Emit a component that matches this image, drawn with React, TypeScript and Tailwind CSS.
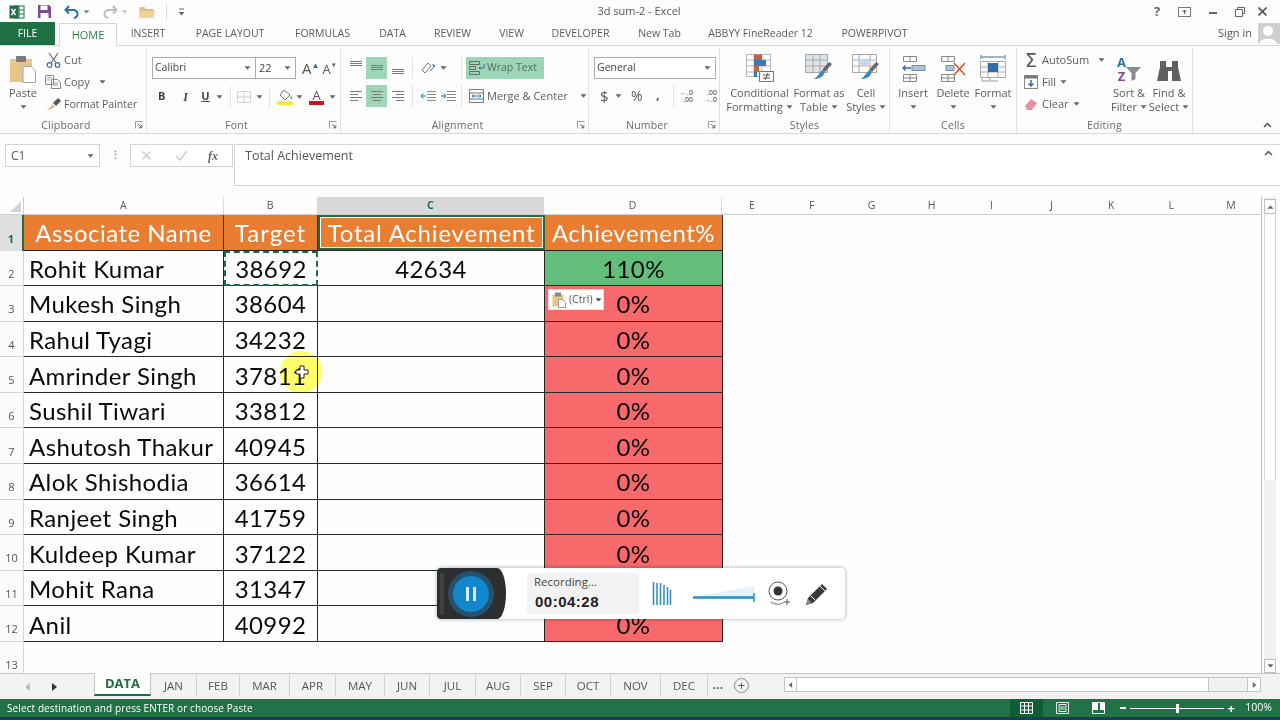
import React from "react";

const Caret = ({ c = "#666", className = "" }: { c?: string; className?: string }) => (
  <svg width="7" height="4" viewBox="0 0 7 4" className={className}><path d="M0.5 0.2h6L3.5 3.8z" fill={c} /></svg>
);

const Sep = () => <div className="w-px h-[22px] bg-[#e4e4e4] shrink-0" />;

const Lines = ({ kind, y = 0 }: { kind: "l" | "c" | "r" | "top" | "mid" | "bot"; y?: number }) => {
  const rows: [number, number][] =
    kind === "l" ? [[1, 13], [1, 9], [1, 13], [1, 9]] :
    kind === "c" ? [[1, 13], [3, 11], [1, 13], [3, 11]] :
    kind === "r" ? [[1, 13], [5, 13], [1, 13], [5, 13]] :
    [[1, 13], [1, 13], [1, 13]];
  const start = kind === "top" ? 1 : kind === "mid" ? 5 : kind === "bot" ? 9 : 3;
  return (
    <svg width="14" height="16" viewBox="0 0 14 16">
      {rows.map((r, i) => (
        <path key={i} d={`M${r[0]} ${start + i * (rows.length === 3 ? 2 : 3) + y + 0.5}H${r[1]}`} stroke="#7a7a7a" strokeWidth="1" />
      ))}
    </svg>
  );
};

const Big = ({ w, l1, l2, caret, children }: { w: number; l1: string; l2?: string; caret?: boolean; children: React.ReactNode }) => (
  <div className="flex flex-col items-center shrink-0 leading-[14px]" style={{ width: w }}>
    <div className="h-[32px] flex items-end justify-center">{children}</div>
    <div className="mt-[3px] whitespace-nowrap">{l1}</div>
    <div className="flex items-center justify-center gap-[3px] whitespace-nowrap h-[14px]">
      {l2 && <span>{l2}</span>}
      {caret && <Caret />}
    </div>
  </div>
);

const Launcher = () => (
  <svg width="8" height="8" viewBox="0 0 8 8"><path d="M0.5 7.5V0.5H7.5" fill="none" stroke="#999" /><path d="M3 3l3.5 3.5M6.8 3.8v3h-3" fill="none" stroke="#666" /></svg>
);

const Group = ({ w, label, launcher, children }: { w: number; label: string; launcher?: boolean; children: React.ReactNode }) => (
  <div className="flex flex-col shrink-0 h-[86px] mt-[1px] border-r border-[#e2e2e2]" style={{ width: w }}>
    <div className="flex-1 min-h-0">{children}</div>
    <div className={`h-[16px] relative flex items-center justify-center text-[10.5px] text-[#6a6a6a] tracking-[0.2px] pt-[1px] ${launcher ? "pr-[14px]" : ""}`}>
      <span>{label}</span>
      {launcher && <span className="absolute right-[3px] top-[4px] flex"><Launcher /></span>}
    </div>
  </div>
);

const sheetTabs: [string, number][] = [["JAN", 46], ["FEB", 43], ["MAR", 50], ["APR", 46], ["MAY", 49], ["JUN", 45], ["JUL", 46], ["AUG", 45], ["SEP", 45], ["OCT", 45], ["NOV", 50], ["DEC", 47]];

const rows: [string, string, string, string][] = [
  ["Rohit Kumar", "38692", "42634", "110%"],
  ["Mukesh Singh", "38604", "", "0%"],
  ["Rahul Tyagi", "34232", "", "0%"],
  ["Amrinder Singh", "37811", "", "0%"],
  ["Sushil Tiwari", "33812", "", "0%"],
  ["Ashutosh Thakur", "40945", "", "0%"],
  ["Alok Shishodia", "36614", "", "0%"],
  ["Ranjeet Singh", "41759", "", "0%"],
  ["Kuldeep Kumar", "37122", "", "0%"],
  ["Mohit Rana", "31347", "", "0%"],
  ["Anil", "40992", "", "0%"],
];

const ribbonTabs: [string, number][] = [["INSERT", 62], ["PAGE LAYOUT", 102], ["FORMULAS", 83], ["DATA", 57], ["REVIEW", 63], ["VIEW", 55], ["DEVELOPER", 83], ["New Tab", 75], ["ABBYY FineReader 12", 127], ["POWERPIVOT", 101]];

const colLetters = ["E", "F", "G", "H", "I", "J", "K", "L", "M"];

export default function App() {
  return (
    <div className="relative w-[1280px] h-[720px] overflow-hidden bg-[#fdfdfd] flex flex-col font-['Open_Sans',sans-serif] text-[11px] text-[#5c5c5c]">
      {/* Title bar */}
      <div className="h-[23px] flex items-center shrink-0 relative">
        <div className="flex items-center w-[200px] pl-[9px]">
          <svg width="16" height="16" viewBox="0 0 16 16"><rect x="6" y="2" width="9" height="12" fill="#fff" stroke="#217346" /><path d="M10 2v12M6 6h9M6 10h9" stroke="#217346" /><rect x="0.5" y="1.5" width="9" height="13" fill="#1d7044" /><path d="M2.5 5l4 6M6.5 5l-4 6" stroke="#fff" strokeWidth="1.4" /></svg>
          <svg className="ml-[12px]" width="15" height="15" viewBox="0 0 15 15"><path d="M1 1h11l2 2v11H1z" fill="#7d4a94" /><rect x="3.5" y="1.5" width="7" height="4.5" fill="#fff" /><rect x="3.5" y="9" width="8" height="5" fill="#fff" /></svg>
          <div className="flex items-center gap-[3px] ml-[12px]">
            <svg width="16" height="14" viewBox="0 0 16 14"><path d="M5 1L1.5 5 5 8.5M2 5h7a4 4 0 0 1 1 8" fill="none" stroke="#2a6fa8" strokeWidth="2" /></svg>
            <Caret c="#888" />
          </div>
          <div className="flex items-center gap-[3px] ml-[12px]">
            <svg width="16" height="14" viewBox="0 0 16 14"><path d="M11 1l3.5 4L11 8.5M14 5H7a4 4 0 0 0-1 8" fill="none" stroke="#bdbdbd" strokeWidth="2" /></svg>
            <Caret c="#c4c4c4" />
          </div>
          <svg className="ml-[11px]" width="16" height="13" viewBox="0 0 16 13"><path d="M0.5 2h5l1 2h8v9h-14z" fill="#e2bd7c" /><path d="M2 6h14l-2 7H0.5z" fill="#f0d49c" /></svg>
          <div className="ml-[11px] w-px h-[16px] bg-[#d9d9d9]" />
          <svg className="ml-[11px]" width="7" height="8" viewBox="0 0 7 8"><path d="M1 1h5" stroke="#666" /><path d="M0.5 4h6L3.5 7.5z" fill="#666" /></svg>
        </div>
        <div className="flex-1 text-center text-[#555] text-[11px] mr-[70px]">3d sum-2 - Excel</div>
        <div className="flex items-center w-[132px] shrink-0">
          <span className="ml-[6px] font-bold text-[#666] text-[13px] leading-none">?</span>
          <svg className="ml-[18px]" width="13" height="10" viewBox="0 0 13 10"><rect x="0.5" y="0.5" width="12" height="9" fill="none" stroke="#777" /><path d="M6.5 7V3M4.5 5l2-2 2 2" fill="none" stroke="#555" /></svg>
          <div className="ml-[18px] w-[8px] h-[2px] bg-[#666] mt-[3px]" />
          <svg className="ml-[18px]" width="10" height="10" viewBox="0 0 10 10"><path d="M2.5 2.5V0.5h7v6H7.5M0.5 2.5h7v7h-7z" fill="none" stroke="#666" /></svg>
          <svg className="ml-[13px]" width="9" height="9" viewBox="0 0 9 9"><path d="M0.5 0.5l8 8M8.5 0.5l-8 8" stroke="#555" strokeWidth="1.6" /></svg>
        </div>
      </div>

      {/* Ribbon tabs */}
      <div className="h-[23px] flex items-end shrink-0 border-b border-[#d6d6d6] relative z-10">
        <div className="w-[55px] h-[23px] bg-[#1f7145] text-white flex items-center justify-center shrink-0 text-[10.5px]">FILE</div>
        <div className="w-[4px] shrink-0" />
        <div className="w-[58px] h-[23px] -mb-px bg-[#fdfdfd] border border-b-0 border-[#d6d6d6] text-[#2f7a55] flex items-center justify-center shrink-0">HOME</div>
        {ribbonTabs.map(([t, w]) => (
          <div key={t} className="h-[23px] flex items-center justify-center shrink-0 whitespace-nowrap text-[#5a5a5a] text-[10.5px]" style={{ width: w }}>{t}</div>
        ))}
        <div className="flex-1 flex items-center justify-end h-[23px]">
          <span className="text-[#555] mr-[6px] text-[11px]">Sign in</span>
          <div className="w-[22px] h-[21px] bg-[#cfcfcf] overflow-hidden flex">
            <svg width="22" height="21" viewBox="0 0 22 21"><circle cx="10" cy="8" r="5" fill="#fff" /><path d="M1 21c1-7 17-7 18 0z" fill="#fff" /></svg>
          </div>
        </div>
      </div>

      {/* Ribbon */}
      <div className="h-[88px] flex shrink-0 border-b border-[#d9d9d9] bg-[#fdfdfd] relative">
        {/* Clipboard */}
        <Group w={147} label="Clipboard" launcher>
          <div className="flex">
            <div className="w-[46px] flex flex-col items-center pt-[8px]">
              <svg width="28" height="28" viewBox="0 0 28 28"><rect x="1" y="4" width="22" height="23" fill="#e5c58a" /><rect x="7" y="1" width="10" height="6" rx="1" fill="#7a7a7a" /><path d="M14 11.5h8l4.5 4.5v11.5H14z" fill="#fff" stroke="#a5a5a5" /></svg>
              <span className="mt-[3px] leading-[14px]">Paste</span>
              <Caret className="mt-[5px]" />
            </div>
            <div className="flex flex-col pt-[2px] leading-[22px]">
              <div className="h-[22px] flex items-center gap-[3px]">
                <svg width="15" height="16" viewBox="0 0 15 16"><path d="M3 1l7 10M12 1L5 11" stroke="#777" strokeWidth="1.3" /><circle cx="3.5" cy="13" r="2.3" fill="none" stroke="#3d6c99" strokeWidth="1.2" /><circle cx="11.5" cy="13" r="2.3" fill="none" stroke="#3d6c99" strokeWidth="1.2" /></svg>
                <span>Cut</span>
              </div>
              <div className="h-[22px] flex items-center gap-[3px] -ml-[1px]">
                <svg width="16" height="14" viewBox="0 0 16 14"><path d="M0.5 0.5h8v9h-8zM6.5 4.5h6l3 3v6h-9z" fill="#fff" stroke="#8a8a8a" /><path d="M2 3h5M2 5h3M8 8h5M8 10h5" stroke="#999" /></svg>
                <span>Copy</span>
                <Caret className="ml-[6px]" />
              </div>
              <div className="h-[22px] flex items-center gap-[2px] -ml-[1px] text-[10.5px]">
                <svg width="17" height="14" viewBox="0 0 17 14"><path d="M1 13c3-1 5-3 6-6l3 3c-3 1-6 3-9 3z" fill="#e0bb74" /><path d="M8 6l5-5 3 3-5 5z" fill="#555" /></svg>
                <span>Format Painter</span>
              </div>
            </div>
          </div>
        </Group>

        {/* Font */}
        <Group w={194} label="Font" launcher>
          <div className="flex flex-col pl-[5px]">
            <div className="flex items-center mt-[10px] h-[22px]">
              <div className="w-[104px] h-[22px] border border-[#acacac] bg-white flex items-center justify-between pl-[2px] pr-[4px] text-[#444] text-[10.5px]">
                <span>Calibri</span><Caret />
              </div>
              <div className="w-[40px] h-[22px] border border-l-0 border-[#acacac] bg-white flex items-center justify-between pl-[3px] pr-[4px] text-[#444]">
                <span>22</span><Caret />
              </div>
              <div className="flex items-baseline ml-[6px] text-[#555] text-[15px] leading-none">
                <span>A</span>
                <span className="text-[8px] text-[#2a6fa8] -translate-y-[6px]">▲</span>
                <span className="ml-[3px] text-[13px]">A</span>
                <span className="text-[6px] text-[#555] -translate-y-[7px]">▼</span>
              </div>
            </div>
            <div className="flex items-center h-[23px] mt-[6px] text-[#444]">
              <span className="w-[18px] pl-[5px] font-bold text-[11px] box-content ml-[1px]">B</span>
              <span className="w-[19px] text-center italic font-bold font-['Liberation_Serif',serif] text-[12px]">I</span>
              <span className="w-[21px] text-center underline font-bold text-[11px]">U</span>
              <Caret className="mr-[7px]" />
              <Sep />
              <svg className="ml-[6px]" width="14" height="12" viewBox="0 0 14 12"><path d="M0.5 0.5h13v11h-13zM7 0.5v11M0.5 6h13" fill="none" stroke="#aaa" strokeDasharray="1 1" /></svg>
              <Caret className="ml-[5px] mr-[6px]" />
              <Sep />
              <div className="ml-[7px] w-[16px] flex flex-col items-center">
                <svg width="15" height="12" viewBox="0 0 15 12"><path d="M6 1l6 5-5 5-5-5z" fill="#fff" stroke="#777" /><path d="M13 7c1 1.5 1.5 2.5 0 3-1-.5-1-1.5 0-3z" fill="#3a7ab0" /></svg>
                <div className="w-[16px] h-[4px] bg-[#f7ea3c]" />
              </div>
              <Caret className="ml-[3px]" />
              <div className="ml-[6px] w-[15px] flex flex-col items-center leading-[12px]">
                <span className="text-[13px] leading-[12px] text-[#555]">A</span>
                <div className="w-[15px] h-[4px] bg-[#d0101c]" />
              </div>
              <Caret className="ml-[5px]" />
            </div>
          </div>
        </Group>

        {/* Alignment */}
        <Group w={248} label="Alignment" launcher>
          <div className="flex pt-[10px] pl-[5px]">
            <div className="flex flex-col gap-[6px]">
              <div className="flex items-center h-[22px]">
                <div className="w-[20px] h-[22px] flex items-center justify-center"><Lines kind="top" /></div>
                <div className="w-[21px] h-[22px] flex items-center justify-center bg-[#9fd5b7]"><Lines kind="mid" /></div>
                <div className="w-[21px] h-[22px] flex items-center justify-center"><Lines kind="bot" /></div>
              </div>
              <div className="flex items-center h-[22px]">
                <div className="w-[20px] h-[22px] flex items-center justify-center"><Lines kind="l" /></div>
                <div className="w-[21px] h-[22px] flex items-center justify-center bg-[#9fd5b7]"><Lines kind="c" /></div>
                <div className="w-[21px] h-[22px] flex items-center justify-center"><Lines kind="r" /></div>
              </div>
            </div>
            <div className="w-[4px]" />
            <div className="flex flex-col gap-[6px]">
              <Sep />
              <Sep />
            </div>
            <div className="flex flex-col gap-[6px] w-[48px]">
              <div className="h-[22px] flex items-center pl-[8px] gap-[4px]">
                <svg width="15" height="14" viewBox="0 0 15 14"><path d="M1 9l6-7 3 3-6 7zM9 10l5-5" fill="none" stroke="#777" /><path d="M11 3l3 1-1 3z" fill="#3a7ab0" /></svg>
                <Caret />
              </div>
              <div className="h-[22px] flex items-center pl-[8px] gap-[5px]">
                <svg width="15" height="12" viewBox="0 0 15 12"><path d="M6 1.5h9M6 4.5h9M6 7.5h9M6 10.5h9" stroke="#8a8a8a" /><path d="M5 6H0M2.5 3.5L0 6l2.5 2.5" fill="none" stroke="#2a6fa8" /></svg>
                <svg width="15" height="12" viewBox="0 0 15 12"><path d="M6 1.5h9M6 4.5h9M6 7.5h9M6 10.5h9" stroke="#8a8a8a" /><path d="M0 6h5M2.5 3.5L5 6 2.5 8.5" fill="none" stroke="#2a6fa8" /></svg>
              </div>
            </div>
            <div className="flex flex-col gap-[6px]">
              <Sep />
              <Sep />
            </div>
            <div className="flex flex-col gap-[6px] ml-[4px]">
              <div className="w-[78px] h-[22px] bg-[#9fd5b7] flex items-center gap-[2px] pl-[3px] text-[#4f6b5c] text-[10.5px]">
                <svg width="16" height="14" viewBox="0 0 16 14"><path d="M0.5 0.5h10v3h-10zM0.5 5.5h6v3h-6zM0.5 10.5h10v3h-10z" fill="none" stroke="#5f6f66" /><path d="M15 3v4h-5M11.5 5.5L10 7l1.5 1.5" fill="none" stroke="#2a6fa8" /></svg>
                <span>Wrap Text</span>
              </div>
              <div className="h-[22px] flex items-center gap-[3px] pl-[3px] whitespace-nowrap">
                <svg width="15" height="14" viewBox="0 0 15 14"><path d="M0.5 0.5h14v13h-14zM0.5 4h14M0.5 10h14" fill="none" stroke="#777" /><path d="M3 7h9M4.5 5.5L3 7l1.5 1.5M10.5 5.5L12 7l-1.5 1.5" fill="none" stroke="#2a6fa8" /></svg>
                <span>Merge &amp; Center</span>
                <Caret className="ml-[9px]" />
              </div>
            </div>
          </div>
        </Group>

        {/* Number */}
        <Group w={131} label="Number" launcher>
          <div className="flex flex-col pt-[10px] pl-[5px]">
            <div className="w-[122px] h-[22px] border border-[#acacac] bg-white flex items-center justify-between pl-[2px] pr-[4px] text-[#444] text-[10.5px]">
              <span>General</span><Caret />
            </div>
            <div className="flex items-center h-[22px] mt-[6px]">
              <span className="ml-[6px] w-[10px] text-[15px] text-[#555] leading-none">$</span>
              <Caret className="ml-[5px]" />
              <span className="ml-[9px] w-[14px] text-[14px] text-[#555] leading-none">%</span>
              <span className="ml-[11px] w-[4px] font-bold text-[13px] text-[#555] leading-none -mt-[4px]">,</span>
              <div className="ml-[13px]"><Sep /></div>
              <div className="ml-[3px] text-[7px] leading-[7px] text-[#666] font-semibold w-[16px] text-right"><div>←.0</div><div>.00</div></div>
              <div className="ml-[8px] text-[7px] leading-[7px] text-[#666] font-semibold w-[16px] text-right"><div>.00</div><div>→.0</div></div>
            </div>
          </div>
        </Group>

        {/* Styles */}
        <Group w={170} label="Styles">
          <div className="flex pt-[4px] pl-[2px]">
            <Big w={75} l1="Conditional" l2="Formatting" caret>
              <svg width="30" height="30" viewBox="0 0 30 30">
                <path d="M1.5 1.5h24v22h-24zM1.5 7h24M1.5 13h24M1.5 19h24M9 1.5v22M17 1.5v22" fill="none" stroke="#b5b5b5" />
                <rect x="9" y="1.5" width="8" height="5.5" fill="#c8603c" /><rect x="9" y="7" width="12" height="6" fill="#3f78b4" /><rect x="9" y="13" width="5" height="6" fill="#c8603c" /><rect x="9" y="19" width="3" height="5" fill="#3f78b4" />
                <rect x="14.5" y="18.5" width="14" height="10" fill="#fff" stroke="#777" /><path d="M18 22h7M18 25h7M23 20l-3 7" stroke="#555" />
              </svg>
            </Big>
            <Big w={44} l1="Format as" l2="Table" caret>
              <svg width="30" height="30" viewBox="0 0 30 30">
                <path d="M1.5 1.5h22v18h-22z" fill="#dfe3ea" stroke="#a8a8a8" /><path d="M1.5 7h22M1.5 13h22M9 1.5v18M16 1.5v18" stroke="#a8a8a8" />
                <path d="M25 9l3 2-7 8-3-2z" fill="#666" /><path d="M17 18c3-1 4 1 3 3-1 3-6 5-10 5 3-2 5-5 7-8z" fill="#3a85c4" />
              </svg>
            </Big>
            <Big w={50} l1="Cell" l2="Styles" caret>
              <svg width="30" height="30" viewBox="0 0 30 30">
                <path d="M1.5 1.5h24v18h-24z" fill="none" stroke="#a8a8a8" /><path d="M1.5 7h24M1.5 13h24M8 1.5v18M19 1.5v18" stroke="#a8a8a8" />
                <rect x="8" y="7" width="11" height="6" fill="#c8d7ea" />
                <path d="M25 9l3 2-7 8-3-2z" fill="#666" /><path d="M17 18c3-1 4 1 3 3-1 3-6 5-10 5 3-2 5-5 7-8z" fill="#3a85c4" />
              </svg>
            </Big>
          </div>
        </Group>

        {/* Cells */}
        <Group w={127} label="Cells">
          <div className="flex pt-[4px] pl-[3px]">
            <Big w={40} l1="Insert" caret>
              <svg width="26" height="28" viewBox="0 0 26 28"><path d="M3.5 1.5h13v5h-13zM10 1.5v5M3.5 19.5h13v7h-13zM10 19.5v7M3.5 23h13" fill="none" stroke="#888" /><rect x="12" y="10.5" width="13" height="5" fill="#aec3d8" stroke="#7a8c9c" /><path d="M3 13h8M5.5 10.5L3 13l2.5 2.5" fill="none" stroke="#2a6fa8" strokeWidth="1.3" /></svg>
            </Big>
            <Big w={40} l1="Delete" caret>
              <svg width="28" height="28" viewBox="0 0 28 28"><path d="M2.5 1.5h13v5h-13zM9 1.5v5M2.5 19.5h13v7h-13zM9 19.5v7M2.5 23h13" fill="none" stroke="#888" /><rect x="7" y="10.5" width="8" height="5" fill="#aec3d8" stroke="#7a8c9c" /><path d="M15 8l11 12M26 8L15 20" stroke="#d9502e" strokeWidth="1.6" /></svg>
            </Big>
            <Big w={40} l1="Format" caret>
              <svg width="28" height="30" viewBox="0 0 28 30"><path d="M2 2v4M26 2v4M3 4h22" fill="none" stroke="#2a6fa8" /><path d="M1.5 8.5h25v16h-25zM1.5 14h25M1.5 19h25M9 8.5v16M19 8.5v16" fill="none" stroke="#aaa" /><rect x="9" y="10" width="10" height="9" fill="#2f6fa8" /><path d="M3 25v3h8M11 25v3h8" fill="none" stroke="#999" /></svg>
            </Big>
          </div>
        </Group>

        {/* Editing */}
        <Group w={176} label="Editing">
          <div className="flex pl-[7px] pt-[2px]">
            <div className="flex flex-col w-[87px]">
              <div className="h-[22px] flex items-center gap-[4px]">
                <span className="text-[#555] text-[19px] leading-none w-[14px] text-center font-['DejaVu_Sans',sans-serif]">Σ</span>
                <span>AutoSum</span><Caret className="ml-[5px]" />
              </div>
              <div className="h-[22px] flex items-center gap-[4px]">
                <svg width="14" height="14" viewBox="0 0 14 14"><rect x="0.5" y="0.5" width="13" height="13" fill="#fff" stroke="#888" /><rect x="0.5" y="0.5" width="13" height="3" fill="#777" /><path d="M7 5v6M4.5 8.5L7 11l2.5-2.5" fill="none" stroke="#2a6fa8" strokeWidth="1.5" /></svg>
                <span>Fill</span><Caret />
              </div>
              <div className="h-[22px] flex items-center gap-[4px]">
                <svg width="14" height="13" viewBox="0 0 14 13"><path d="M1 8l6-7 6 4-5 7H3z" fill="#e5909a" /></svg>
                <span>Clear</span><Caret />
              </div>
            </div>
            <div className="-ml-[2px] pt-[2px]">
              <Big w={40} l1="Sort &" l2="Filter" caret>
                <div className="flex items-end h-[28px] leading-[14px] font-bold">
                  <div className="flex flex-col text-[13px] items-center"><span className="text-[#2a6fa8]">A</span><span className="text-[#7d4a94]">Z</span></div>
                  <svg width="15" height="20" viewBox="0 0 15 20"><path d="M0 4h15L9.5 10v6l-4 2v-8z" fill="#8a8a8a" /></svg>
                </div>
              </Big>
            </div>
            <div className="pt-[2px]">
              <Big w={40} l1="Find &" l2="Select" caret>
                <svg width="26" height="24" viewBox="0 0 26 24"><path d="M4 2h6v6h6V2h6v6l3 14h-9V12h-4v10H1L4 8z" fill="#606060" /></svg>
              </Big>
            </div>
          </div>
        </Group>

        <div className="flex-1 flex items-end justify-end pr-[8px] pb-[5px]">
          <svg width="9" height="6" viewBox="0 0 9 6"><path d="M1 5l3.5-3.5L8 5" fill="none" stroke="#555" strokeWidth="1.5" /></svg>
        </div>
      </div>

      {/* Formula bar */}
      <div className="h-[63px] shrink-0 flex pt-[10px] pl-[5px] bg-[#fdfdfd]">
        <div className="w-[95px] h-[23px] border border-[#d4d4d4] bg-white flex items-center justify-between pl-[5px] pr-[5px]">
          <span className="text-[#555] text-[12px]">C1</span><Caret />
        </div>
        <div className="w-[30px] h-[23px] flex items-center justify-center text-[#999] font-bold">⋮</div>
        <div className="w-[103px] h-[23px] border border-[#d4d4d4] bg-white flex items-center pl-[10px]">
          <svg width="11" height="11" viewBox="0 0 11 11"><path d="M1.5 1.5l8 8M9.5 1.5l-8 8" stroke="#c9c9c9" strokeWidth="1.4" /></svg>
          <svg className="ml-[23px]" width="13" height="11" viewBox="0 0 13 11"><path d="M1 6l4 4 7-9" fill="none" stroke="#c9c9c9" strokeWidth="1.4" /></svg>
          <span className="ml-[20px] font-['Liberation_Serif',serif] italic font-bold text-[#666] text-[12px]">fx</span>
        </div>
        <div className="ml-[1px] flex-1 h-[42px] border border-r-0 border-[#d4d4d4] bg-white flex justify-between pl-[10px] pr-[7px] pt-[2px] text-[#555] text-[12.5px]">
          <span>Total Achievement</span>
          <svg className="mt-[3px]" width="9" height="6" viewBox="0 0 9 6"><path d="M1 5l3.5-3.5L8 5" fill="none" stroke="#555" strokeWidth="1.5" /></svg>
        </div>
      </div>

      {/* Sheet */}
      <div className="h-[476px] shrink-0 flex overflow-hidden bg-[#fefefe]">
        <div className="w-[1262px] shrink-0 flex flex-col border-r border-[#bdbdbd]">
          <div className="h-[18px] flex shrink-0 text-[10.5px] text-[#555] border-b border-[#cfcfcf]">
            <div className="w-[24px] flex items-end justify-end pr-[2px] pb-[2px] border-r border-[#cfcfcf]"><svg width="11" height="11" viewBox="0 0 11 11"><path d="M11 0v11H0z" fill="#d4d4d4" /></svg></div>
            <div className="w-[200px] flex items-center justify-center border-r border-[#dcdcdc]">A</div>
            <div className="w-[93px] flex items-center justify-center">B</div>
            <div className="w-[228px] flex items-center justify-center bg-[#d8d8d8] text-[#1e6b44] font-bold">C</div>
            <div className="w-[178px] flex items-center justify-center border-r border-[#dcdcdc]">D</div>
            {colLetters.map((c) => (
              <div key={c} className="w-[60px] flex items-center justify-center">{c}</div>
            ))}
          </div>
          {/* header row */}
          <div className="h-[35.58px] w-[723px] flex shrink-0 font-['Lato',sans-serif] text-[24px] text-white tracking-[0.5px] border-b border-[#222]">
            <div className="w-[24px] -mb-px bg-[#e0e0e0] border-r-2 border-[#1e6b44] text-[#1e6b44] font-bold font-['Open_Sans',sans-serif] text-[11px] flex items-end justify-center pb-[3px] tracking-normal">1</div>
            <div className="w-[200px] bg-[#e97d31] border-r border-[#333] flex items-center justify-center pt-[2px]">Associate Name</div>
            <div className="w-[94px] bg-[#e97d31] border-r border-[#333] flex items-center justify-center pt-[2px] tracking-[1px]">Target</div>
            <div className="w-[227px] bg-[#e97d31] flex items-center justify-center pt-[2px] tracking-[0.8px] shadow-[inset_0_0_0_2px_#1e6b44,inset_0_0_0_3px_#f4f4f4]">Total Achievement</div>
            <div className="w-[178px] bg-[#e97d31] flex items-center justify-center pt-[2px] border-r border-[#333]">Achievement%</div>
          </div>
          {rows.map((r, i) => (
            <div key={r[0]} className="h-[35.58px] w-[723px] flex shrink-0 font-['Lato',sans-serif] text-[24px] text-[#0a0a0a] tracking-[0.4px] border-b border-[#2a2a2a]">
              <div className="w-[24px] -mb-px bg-[#fbfbfb] border-b border-r border-[#d4d4d4] text-[#555] font-['Open_Sans',sans-serif] text-[11px] flex items-end justify-center pb-[3px] tracking-normal">{i + 2}</div>
              <div className="w-[200px] border-r border-[#222] flex items-center pl-[5px] pt-[2px] whitespace-nowrap">{r[0]}</div>
              <div className={`w-[94px] flex items-center justify-center pt-[2px] ${i === 0 ? "-mb-px border-2 border-dashed border-[#1e6b44]" : "border-r border-[#222]"}`}>{r[1]}</div>
              <div className="w-[227px] border-r border-[#222] flex items-center justify-center pt-[2px]">{r[2]}</div>
              <div className={`w-[178px] border-r border-[#222] flex items-center justify-center pt-[2px] ${i === 0 ? "bg-[#63be7b]" : "bg-[#f8696b]"}`}>{r[3]}</div>
            </div>
          ))}
          <div className="flex-1 flex">
            <div className="w-[24px] bg-[#fbfbfb] border-r border-[#d4d4d4] text-[#555] text-[11px] flex items-end justify-center">13</div>
          </div>
        </div>
        {/* Vertical scrollbar */}
        <div className="w-[18px] shrink-0 pl-[2px] bg-[#fdfdfd]">
          <div className="w-[12px] h-full flex flex-col items-center bg-[#f0f0f0]">
            <div className="w-[12px] h-[15px] mt-[2px] border border-[#bdbdbd] bg-white flex items-center justify-center"><Caret className="rotate-180" /></div>
            <div className="w-[12px] h-[265px] border-x border-[#d8d8d8] bg-white mt-[1px]" />
            <div className="flex-1" />
            <div className="w-[12px] h-[14px] border border-[#bdbdbd] bg-white flex items-center justify-center"><Caret /></div>
          </div>
        </div>
      </div>

      {/* Sheet tabs */}
      <div className="h-[26px] shrink-0 flex items-start bg-[#f2f2f2] border-t border-[#c4c4c4]">
        <div className="w-[94px] h-[25px] flex items-center pl-[25px] gap-[22px] shrink-0">
          <svg width="5" height="8" viewBox="0 0 5 8"><path d="M5 0v8L0 4z" fill="#bbb" /></svg>
          <svg width="5" height="8" viewBox="0 0 5 8"><path d="M0 0v8l5-4z" fill="#333" /></svg>
        </div>
        <div className="w-[57px] h-[23px] -mt-px bg-white border-x border-[#c4c4c4] border-b-2 border-b-[#1e6b44] text-[#1e6b44] font-bold text-[13px] flex items-center justify-center shrink-0">DATA</div>
        {sheetTabs.map(([t, w]) => (
          <div key={t} className="h-[21px] mt-[1px] flex items-center justify-center text-[11.5px] text-[#555] border-r border-[#d0d0d0] shrink-0 last:border-r-0" style={{ width: w }}>{t}</div>
        ))}
        <div className="w-[20px] h-[21px] flex items-center justify-center shrink-0 text-[#666] font-bold text-[12px]">...</div>
        <div className="ml-[6px] w-[15px] h-[15px] mt-[4px] rounded-full border border-[#888] flex items-center justify-center shrink-0 text-[#555] text-[13px] leading-none">+</div>
        <div className="ml-[35px] mt-[3px] w-[477px] h-[15px] shrink-0 border border-[#c4c4c4] bg-white flex">
          <div className="w-[12px] border-r border-[#c4c4c4] flex items-center justify-center"><Caret className="rotate-90" /></div>
          <div className="flex-1" />
          <div className="w-[39px] bg-[#f0f0f0] border-l border-[#c4c4c4]" />
          <div className="w-[13px] border-l border-[#c4c4c4] flex items-center justify-center"><Caret className="-rotate-90" /></div>
        </div>
      </div>

      {/* Status bar */}
      <div className="h-[18px] shrink-0 bg-[#217346] text-white flex items-center text-[10px]">
        <span className="pl-[7px] flex-1 tracking-[0.1px]">Select destination and press ENTER or choose Paste</span>
        <div className="flex items-center h-[18px] shrink-0">
          <div className="w-[33px] h-[18px] bg-[#0f5f34] flex items-center justify-center">
            <svg width="13" height="12" viewBox="0 0 13 12"><path d="M0.5 0.5h12v11h-12zM4.5 0.5v11M8.5 0.5v11M0.5 4h12M0.5 8h12" fill="none" stroke="#fff" /></svg>
          </div>
          <div className="w-[38px] flex items-center justify-center">
            <svg width="13" height="12" viewBox="0 0 13 12"><path d="M0.5 0.5h12v11h-12zM3 2.5h7v7H3zM4 5h5M4 7h5" fill="none" stroke="#e5efe9" /></svg>
          </div>
          <div className="w-[34px] flex items-center justify-center">
            <svg width="13" height="12" viewBox="0 0 13 12"><path d="M0.5 0.5h12v11h-12z" fill="none" stroke="#fff" /><path d="M1 1h5v7H1zM8 1h4v7H8z" fill="#fff" /></svg>
          </div>
          <div className="w-[6px] h-[2px] bg-white ml-[5px]" />
          <div className="w-[94px] h-px bg-white ml-[4px] flex items-center justify-center">
            <div className="w-[3px] h-[9px] bg-white" />
          </div>
          <div className="ml-[3px] w-[8px] h-[8px] flex items-center justify-center font-bold text-[13px] leading-none">+</div>
          <span className="ml-[10px] mr-[8px] text-[10.5px]">100%</span>
        </div>
      </div>
      <div className="h-[3px] shrink-0 bg-[#1c3a5e]" />

      {/* Paste options button */}
      <div className="absolute left-[548px] top-[289px] w-[56px] h-[21px] bg-white border border-[#e2e2e2] flex items-center pl-[3px] gap-[2px] text-[10.5px] text-[#555]">
        <svg width="15" height="16" viewBox="0 0 15 16"><rect x="0.5" y="2.5" width="11" height="12" fill="#e5c58a" /><rect x="3" y="0.5" width="6" height="4" fill="#888" /><path d="M6.5 7.5h4l3 3v5h-7z" fill="#fff" stroke="#999" /></svg>
        <span>(Ctrl)</span>
        <Caret c="#555" />
      </div>

      {/* Cursor highlight */}
      <div className="absolute left-[280px] top-[351px] w-[42px] h-[42px] rounded-full bg-[#ffff50] mix-blend-multiply opacity-85" />
      <svg className="absolute left-[295px] top-[365px]" width="14" height="14" viewBox="0 0 14 14"><path d="M5 1h4v4h4v4H9v4H5V9H1V5h4z" fill="#fff" stroke="#222" /></svg>

      {/* Recorder */}
      <div className="absolute left-[437px] top-[568px] w-[408px] h-[51px] bg-white rounded-[4px] shadow-[0_0_4px_rgba(0,0,0,0.35)] flex items-center overflow-hidden">
        <div className="w-[69px] h-[51px] bg-[#2c2f31] rounded-r-[9px_26px] flex items-center shrink-0 pl-[3px]">
          <div className="w-[4px] h-[42px] bg-[#3e4143] shrink-0" />
          <div className="w-[46px] h-[46px] rounded-full bg-[#27506d] flex items-center justify-center ml-[4px] shrink-0">
            <div className="w-[36px] h-[36px] rounded-full bg-[#1287cd] flex items-center justify-center gap-[4px]">
              <div className="w-[3px] h-[14px] bg-[#d8ecf8]" />
              <div className="w-[3px] h-[14px] bg-[#d8ecf8]" />
            </div>
          </div>
        </div>
        <div className="ml-[21px] w-[112px] h-[41px] bg-[#f2f2f2] rounded-[3px] pl-[7px] pt-[1px] shrink-0 flex flex-col">
          <span className="text-[11.5px] leading-[16px] text-[#444]">Recording...</span>
          <span className="ml-[1px] text-[15px] leading-[23px] font-bold text-[#222] font-['Liberation_Sans',sans-serif] tracking-[0.5px]">00:04:28</span>
        </div>
        <svg className="ml-[13px] shrink-0" width="20" height="24" viewBox="0 0 20 24">
          <path d="M1.5 0v23M5 1v22M8.5 1v22M12 3v20M15.5 5v18M18.5 8v15" stroke="#2e8cb8" strokeWidth="1.5" />
        </svg>
        <svg className="ml-[20px] shrink-0" width="64" height="18" viewBox="0 0 64 18">
          <path d="M1 12L62 1v11z" fill="#e6f1f7" />
          <path d="M1 12.5h61" stroke="#2290c0" strokeWidth="2.4" />
          <path d="M62 8v9" stroke="#2290c0" strokeWidth="1.5" />
        </svg>
        <svg className="ml-[12px] shrink-0" width="24" height="26" viewBox="0 0 24 26">
          <circle cx="10" cy="10" r="9" fill="#fff" stroke="#555" />
          <circle cx="10" cy="10" r="4.5" fill="#333" />
          <path d="M3 21c4 3 10 3 13 0" fill="none" stroke="#666" />
          <path d="M16 21h6M19 18v6" stroke="#555" />
        </svg>
        <svg className="ml-[13px] shrink-0" width="24" height="24" viewBox="0 0 24 24">
          <path d="M1 23l2-7L17 2l5 5L8 21z" fill="#3a3a3a" />
          <path d="M15 4l5 5M6 14l4 4" stroke="#fff" strokeWidth="1" />
          <path d="M1 23l2-6 4 4z" fill="#888" />
        </svg>
      </div>
    </div>
  );
}
